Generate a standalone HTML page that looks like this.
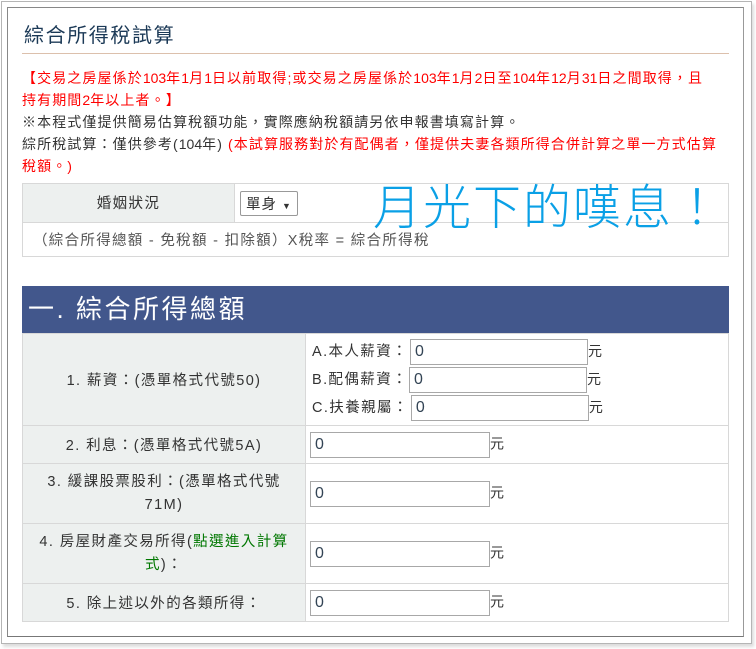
<!DOCTYPE html>
<html><head><meta charset="utf-8"><style>
*{box-sizing:border-box;margin:0;padding:0}
body{width:756px;height:649px;background:#fff;position:relative;overflow:hidden;font-family:"Liberation Sans","Noto Sans CJK TC",sans-serif;color:#444;font-size:14px}
.outer{position:absolute;left:1px;top:1px;width:751px;height:643px;border:1px solid #b5b5b5;box-shadow:2px 3px 3px #ddd}
.inner{position:absolute;left:7px;top:7px;width:737px;height:630px;border:1px solid #888;border-right-color:#999;border-bottom-color:#777}
.title{position:absolute;left:24px;top:19px;font-size:20px;letter-spacing:1.6px;color:#1c3a57}
.hr{position:absolute;left:22px;top:53px;width:707px;height:1px;background:#dcc0ac}
.note{position:absolute;left:22px;top:67px;width:730px;font-size:14px;line-height:22px;letter-spacing:1.1px;white-space:nowrap}
.d{letter-spacing:0}
.red{color:#f00}.blk{color:#333}
table{border-collapse:collapse;position:absolute}
td{border:1px solid #d8d8d8}
.lab{background:#edf0ef;text-align:center;color:#333;font-size:14.5px;letter-spacing:1.4px}
input{border:1px solid #a8a8a8;height:26px;font-size:16px;padding-left:4px;color:#345;font-family:"Liberation Sans",sans-serif;vertical-align:middle;background:#fff}
.hand{position:absolute;left:373px;top:168px;font-size:48px;color:#0aa0e6;font-family:"WenQuanYi Zen Hei","Noto Sans CJK TC",sans-serif;letter-spacing:2px;font-weight:300}
.bar{position:absolute;left:22px;top:286px;width:707px;height:47px;background:#42578c;color:#fff;font-size:26px;letter-spacing:2.5px;line-height:47px;padding-left:6px}
.y{font-size:14px;color:#333}
.r1{font-size:14.5px;letter-spacing:1.4px;color:#333}
</style></head><body>
<div class="outer"></div><div class="inner"></div>
<div class="title">綜合所得稅試算</div>
<div class="hr"></div>
<div class="note"><span class="red">【交易之房屋係於<span class="d">103</span>年<span class="d">1</span>月<span class="d">1</span>日以前取得;或交易之房屋係於<span class="d">103</span>年<span class="d">1</span>月<span class="d">2</span>日至<span class="d">104</span>年<span class="d">12</span>月<span class="d">31</span>日之間取得，且<br>持有期間<span class="d">2</span>年以上者。】</span><br><span class="blk">※本程式僅提供簡易估算稅額功能，實際應納稅額請另依申報書填寫計算。<br>綜所稅試算：僅供參考(<span class="d">104</span>年)</span> <span class="red">(本試算服務對於有配偶者，僅提供夫妻各類所得合併計算之單一方式估算<br>稅額。)</span></div>
<table style="left:22px;top:183px;width:707px">
<tr style="height:39px"><td class="lab" style="width:212px;vertical-align:top;padding-top:8px">婚姻狀況</td><td style="padding-left:5px"><span style="display:inline-block;border:1px solid #999;padding:1px 5px;font-size:14.5px;letter-spacing:1px;color:#333;border-radius:2px">單身 <span style="font-size:9px">▼</span></span></td></tr>
<tr style="height:34px"><td colspan="2" style="padding-left:10px;color:#555;font-size:14.5px;letter-spacing:1.3px">（綜合所得總額 - 免稅額 - 扣除額）X稅率 = 綜合所得稅</td></tr>
</table>
<div class="hand">月光下的嘆息！</div>
<div class="bar">一. 綜合所得總額</div>
<table style="left:22px;top:333px;width:707px">
<tr style="height:92px"><td class="lab" style="width:283px">1. 薪資：(憑單格式代號50)</td><td style="padding-left:6px;line-height:27px"><span class="r1">A.本人薪資：</span><input style="width:178px;margin-left:2px" value="0"><span class="y">元</span><br><span class="r1">B.配偶薪資：</span><input style="width:178px;margin-left:1px" value="0"><span class="y">元</span><br><span class="r1">C.扶養親屬：</span><input style="width:178px;margin-left:2px" value="0"><span class="y">元</span></td></tr>
<tr style="height:38px"><td class="lab">2. 利息：(憑單格式代號5A)</td><td style="padding-left:4px"><input style="width:180px" value="0"><span class="y">元</span></td></tr>
<tr style="height:60px"><td class="lab" style="padding:0 20px;line-height:23px">3. 緩課股票股利：(憑單格式代號71M)</td><td style="padding-left:4px"><input style="width:180px" value="0"><span class="y">元</span></td></tr>
<tr style="height:60px"><td class="lab" style="padding:0 14px;line-height:23px">4. 房屋財產交易所得(<span style="color:#070">點選進入計算式</span>)：</td><td style="padding-left:4px"><input style="width:180px" value="0"><span class="y">元</span></td></tr>
<tr style="height:38px"><td class="lab">5. 除上述以外的各類所得：</td><td style="padding-left:4px"><input style="width:180px" value="0"><span class="y">元</span></td></tr>
</table>
</body></html>
